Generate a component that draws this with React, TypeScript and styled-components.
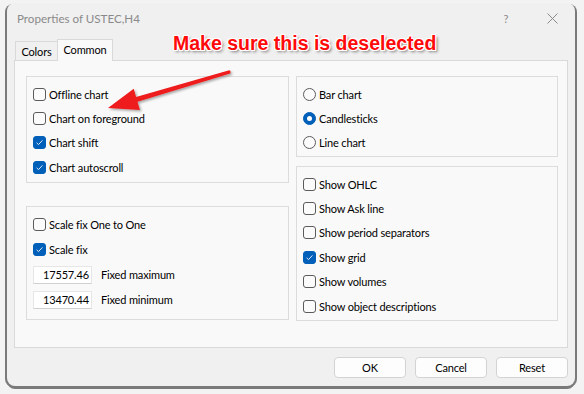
import React from "react";
import styled, { createGlobalStyle } from "styled-components";

const Global = createGlobalStyle`
  html, body { margin: 0; padding: 0; }
  body { background: #f3f3f3; font-family: "Lato", "Liberation Sans", sans-serif; }
`;

const Stage = styled.div`
  position: relative;
  width: 584px;
  height: 394px;
  box-sizing: border-box;
  padding: 3px 9px 8px 7px;
  overflow: hidden;
`;

const Window = styled.div`
  width: 568px;
  height: 383px;
  box-sizing: border-box;
  background: #f0f0f0;
  border-radius: 8px;
  box-shadow: -2px 1px 0 #7a7a7a, 2px 1px 0 #7a7a7a, 0 3px 0 #7a7a7a;
  display: flex;
  flex-direction: column;
  font: 11px "Lato", "Liberation Sans", sans-serif;
  letter-spacing: -0.15px;
  color: #000;
`;

const TitleBar = styled.div`
  height: 30px;
  flex: none;
  display: flex;
  align-items: center;
  padding-left: 10px;
`;

const Title = styled.div`
  flex: 1;
  color: #8a8a8a;
  font-size: 11.6px;
  letter-spacing: 0;
  padding-top: 1px;
`;

const CaptionButton = styled.div`
  width: 46px;
  height: 100%;
  display: flex;
  align-items: center;
  justify-content: center;
  color: #8a8a8a;
  font-size: 11px;
`;

const TabRow = styled.div`
  height: 27px;
  flex: none;
  display: flex;
  align-items: flex-end;
  padding-left: 8px;
`;

const Tab = styled.div<{ $active?: boolean; $w: number }>`
  box-sizing: border-box;
  width: ${(p) => p.$w}px;
  height: ${(p) => (p.$active ? 22 : 19)}px;
  margin-left: ${(p) => (p.$active ? -1 : 0)}px;
  margin-bottom: ${(p) => (p.$active ? -1 : 0)}px;
  position: relative;
  z-index: ${(p) => (p.$active ? 2 : 1)};
  border: 1px solid #d9d9d9;
  border-bottom: none;
  background: ${(p) => (p.$active ? "#f9f9f9" : "#f0f0f0")};
  display: flex;
  align-items: center;
  justify-content: center;
  padding-bottom: ${(p) => (p.$active ? 2 : 0)}px;
`;

const Panel = styled.div`
  box-sizing: border-box;
  height: 288px;
  margin: 0 7px;
  flex: none;
  border: 1px solid #d9d9d9;
  background: #f9f9f9;
  padding: 15px 9px 0 11px;
  display: grid;
  grid-template-columns: 263px 262px;
  column-gap: 7px;
  align-items: start;
`;

const Column = styled.div<{ $gap: number }>`
  display: flex;
  flex-direction: column;
  gap: ${(p) => p.$gap}px;
`;

const Group = styled.div<{ $h: number }>`
  box-sizing: border-box;
  height: ${(p) => p.$h}px;
  border: 1px solid #dcdcdc;
  padding: 5px 0 0 6px;
  display: flex;
  flex-direction: column;
`;

const Row = styled.div<{ $h?: number }>`
  height: ${(p) => p.$h ?? 24.4}px;
  display: flex;
  align-items: center;
  gap: 3px;
  white-space: nowrap;
`;

const Box = styled.span<{ $on?: boolean }>`
  box-sizing: border-box;
  width: 13px;
  height: 13px;
  flex: none;
  border-radius: 3px;
  border: 1px solid ${(p) => (p.$on ? "#005fb8" : "#5b5b5b")};
  background: ${(p) => (p.$on ? "#005fb8" : "#fbfbfb")};
  display: flex;
  align-items: center;
  justify-content: center;
`;

const Radio = styled.span<{ $on?: boolean }>`
  box-sizing: border-box;
  width: 13px;
  height: 13px;
  flex: none;
  border-radius: 50%;
  border: 1px solid ${(p) => (p.$on ? "#005fb8" : "#5b5b5b")};
  background: ${(p) => (p.$on ? "#005fb8" : "#fbfbfb")};
  display: flex;
  align-items: center;
  justify-content: center;
  &::after {
    content: "";
    display: ${(p) => (p.$on ? "block" : "none")};
    width: 5px;
    height: 5px;
    border-radius: 50%;
    background: #fff;
  }
`;

const NumberField = styled.div`
  box-sizing: border-box;
  width: 59px;
  height: 18px;
  background: #fff;
  border: 1px solid #e6e6e6;
  border-bottom-color: #d0d0d0;
  text-align: right;
  padding-right: 2px;
  line-height: 16px;
  margin-right: 6px;
`;

const Footer = styled.div`
  flex: 1;
  display: flex;
  justify-content: flex-end;
  align-items: flex-start;
  gap: 9px;
  padding: 9px 7px 0 0;
`;

const Button = styled.div`
  box-sizing: border-box;
  width: 72px;
  height: 21px;
  border: 1px solid #d3d3d3;
  border-radius: 4px;
  background: #fdfdfd;
  display: flex;
  align-items: center;
  justify-content: center;
`;

const Callout = styled.div`
  position: absolute;
  left: 173px;
  top: 32px;
  font: bold 19.5px "Liberation Sans", Arial, sans-serif;
  color: #ff0a0a;
  white-space: nowrap;
  text-shadow: 1px 0 #fff, -1px 0 #fff, 0 1px #fff, 0 -1px #fff, 1px 1px #fff,
    -1px -1px #fff, 1px -1px #fff, -1px 1px #fff, 2px 2px 3px rgba(0, 0, 0, 0.55);
`;

const ArrowLayer = styled.svg`
  position: absolute;
  left: 0;
  top: 0;
  pointer-events: none;
`;

const Check = () => (
  <svg width="9" height="9" viewBox="0 0 9 9">
    <path d="M1.6 4.8 L3.5 6.6 L7.4 2.4" stroke="#dbe8f6" strokeWidth="1" fill="none" />
  </svg>
);

const CheckRow = ({ on, label }: { on?: boolean; label: string }) => (
  <Row>
    <Box $on={on}>{on && <Check />}</Box>
    {label}
  </Row>
);

const RadioRow = ({ on, label }: { on?: boolean; label: string }) => (
  <Row>
    <Radio $on={on} />
    {label}
  </Row>
);

export default function App() {
  return (
    <Stage>
      <Global />
      <Window>
        <TitleBar>
          <Title>Properties of USTEC,H4</Title>
          <CaptionButton>?</CaptionButton>
          <CaptionButton>
            <svg width="11" height="11" viewBox="0 0 11 11">
              <path d="M0.5 0.5 L10.5 10.5 M10.5 0.5 L0.5 10.5" stroke="#8a8a8a" strokeWidth="1" />
            </svg>
          </CaptionButton>
        </TitleBar>
        <TabRow>
          <Tab $w={43}>Colors</Tab>
          <Tab $w={56} $active>
            Common
          </Tab>
        </TabRow>
        <Panel>
          <Column $gap={23}>
            <Group $h={107}>
              <CheckRow label="Offline chart" />
              <CheckRow label="Chart on foreground" />
              <CheckRow on label="Chart shift" />
              <CheckRow on label="Chart autoscroll" />
            </Group>
            <Group $h={114}>
              <Row $h={25}>
                <Box />
                Scale fix One to One
              </Row>
              <Row $h={25}>
                <Box $on>
                  <Check />
                </Box>
                Scale fix
              </Row>
              <Row $h={25}>
                <NumberField>17557.46</NumberField>
                Fixed maximum
              </Row>
              <Row $h={25}>
                <NumberField>13470.44</NumberField>
                Fixed minimum
              </Row>
            </Group>
          </Column>
          <Column $gap={9}>
            <Group $h={81}>
              <RadioRow label="Bar chart" />
              <RadioRow on label="Candlesticks" />
              <RadioRow label="Line chart" />
            </Group>
            <Group $h={155}>
              <CheckRow label="Show OHLC" />
              <CheckRow label="Show Ask line" />
              <CheckRow label="Show period separators" />
              <CheckRow on label="Show grid" />
              <CheckRow label="Show volumes" />
              <CheckRow label="Show object descriptions" />
            </Group>
          </Column>
        </Panel>
        <Footer>
          <Button>OK</Button>
          <Button>Cancel</Button>
          <Button>Reset</Button>
        </Footer>
      </Window>
      <Callout>Make sure this is deselected</Callout>
      <ArrowLayer width="584" height="394" viewBox="0 0 584 394">
        <defs>
          <filter id="sh" x="-20%" y="-20%" width="140%" height="160%">
            <feDropShadow dx="1.5" dy="1.5" stdDeviation="1.2" floodColor="#000" floodOpacity="0.35" />
          </filter>
        </defs>
        <path
          d="M108 108 L133.7 88.8 L136.1 97 L228.4 70.4 Q230.6 70 230.6 72 Q230.6 73.4 229.4 73.8 L137.5 101.8 L139.9 110 Z"
          fill="#ee1c1c"
          filter="url(#sh)"
        />
      </ArrowLayer>
    </Stage>
  );
}
